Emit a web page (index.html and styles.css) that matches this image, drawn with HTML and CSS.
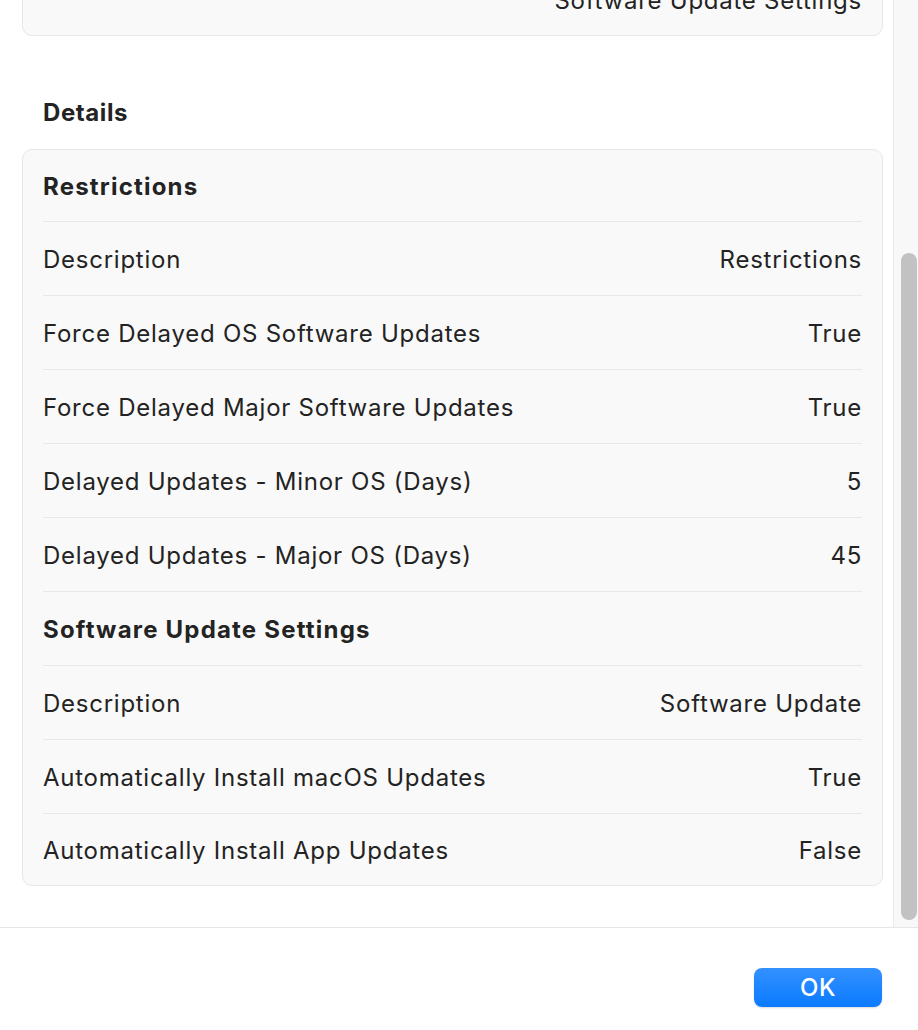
FILE: index.html
```html
<!DOCTYPE html>
<html lang="en">

<head>
    <meta charset="UTF-8">
    <meta name="viewport" content="width=device-width, initial-scale=1.0">
    <title>Profile Details</title>
    <link rel="stylesheet" href="styles.css">
</head>

<body>
    <div class="window">
        <div class="main">
            <div class="content">
                <div class="card card-prev">
                    <div class="row">
                        <span class="label"></span>
                        <span class="value">Software Update Settings</span>
                    </div>
                </div>

                <h2 class="section-title">Details</h2>

                <div class="card">
                    <div class="row group">Restrictions</div>
                    <div class="row">
                        <span class="label">Description</span>
                        <span class="value">Restrictions</span>
                    </div>
                    <div class="row">
                        <span class="label">Force Delayed OS Software Updates</span>
                        <span class="value">True</span>
                    </div>
                    <div class="row">
                        <span class="label">Force Delayed Major Software Updates</span>
                        <span class="value">True</span>
                    </div>
                    <div class="row">
                        <span class="label">Delayed Updates - Minor OS (Days)</span>
                        <span class="value">5</span>
                    </div>
                    <div class="row">
                        <span class="label">Delayed Updates - Major OS (Days)</span>
                        <span class="value">45</span>
                    </div>
                    <div class="row group">Software Update Settings</div>
                    <div class="row">
                        <span class="label">Description</span>
                        <span class="value">Software Update</span>
                    </div>
                    <div class="row">
                        <span class="label">Automatically Install macOS Updates</span>
                        <span class="value">True</span>
                    </div>
                    <div class="row">
                        <span class="label">Automatically Install App Updates</span>
                        <span class="value">False</span>
                    </div>
                </div>
            </div>

            <div class="scrollbar">
                <div class="thumb"></div>
            </div>
        </div>

        <div class="footer">
            <button type="button" class="btn-ok">OK</button>
        </div>
    </div>
</body>

</html>
```

FILE: styles.css
```css
body {
    margin: 0;
    font-family: Inter, "Noto Sans", sans-serif;
    color: #232323;
    background: #fff;
}

.window {
    width: 918px;
    height: 1030px;
    display: flex;
    flex-direction: column;
    overflow: hidden;
}

.main {
    height: 927px;
    display: flex;
    overflow: hidden;
}

.content {
    flex: 1;
    padding: 0 10px 0 22px;
}

.card {
    background: #f9f9f9;
    border: 1px solid #e7e7e7;
    border-radius: 10px;
    padding: 0 20px;
}

.card-prev {
    margin-top: -37px;
}

/* 1px border + 1px pad + 72 = 74px per row */
.row {
    height: 72px;
    padding-top: 1px;
    display: flex;
    align-items: center;
    justify-content: space-between;
    border-top: 1px solid #e8e8e8;
    font-size: 24px;
    letter-spacing: 0.75px;
}

.row:first-child {
    height: 70px;
    border-top: none;
}

.row:last-child {
    height: 70px;
}

.row.group {
    font-weight: 700;
    letter-spacing: 1.2px;
}

.section-title {
    margin: 62px 0 21px 21px;
    font-size: 24px;
    line-height: 30px;
    font-weight: 700;
    letter-spacing: 0.6px;
}

.scrollbar {
    width: 25px;
    border-left: 1px solid #ebebeb;
    background: #f8f8f8;
    padding-top: 253px;
    box-sizing: border-box;
}

.thumb {
    width: 16px;
    height: 667px;
    margin-left: 7px;
    border-radius: 8px;
    background: #c2c2c2;
}

.footer {
    flex: 1;
    border-top: 1px solid #e6e6e6;
    display: flex;
    justify-content: flex-end;
    align-items: flex-start;
    padding: 40px 36px 0 0;
}

.btn-ok {
    width: 128px;
    height: 39px;
    border: none;
    border-radius: 8px;
    background: linear-gradient(#3391ff, #0a7aff);
    box-shadow: 0 1px 2px rgba(0, 0, 0, 0.15);
    color: #fff;
    font-family: Inter, "Noto Sans", sans-serif;
    font-size: 24px;
    font-weight: 500;
    letter-spacing: 0.5px;
    padding: 0;
    cursor: pointer;
}
```
